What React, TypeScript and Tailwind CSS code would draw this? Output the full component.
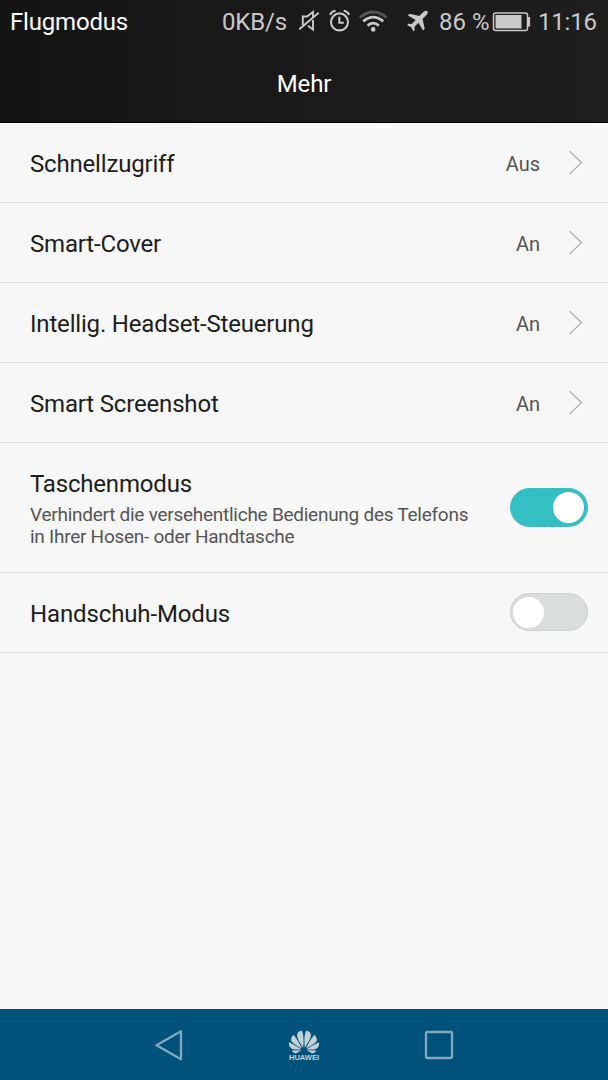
import React from "react"
import { SiHuawei } from "react-icons/si"

const links = [
  { label: "Schnellzugriff", value: "Aus" },
  { label: "Smart-Cover", value: "An" },
  { label: "Intellig. Headset-Steuerung", value: "An" },
  { label: "Smart Screenshot", value: "An" },
]

function StatusBar() {
  return (
    <div className="flex h-[42px] items-center whitespace-nowrap pt-[2px] pl-[10px] text-2xl leading-[42px] tracking-[-0.18px] text-[#c9c9c9]">
      <span className="w-[212px] text-white">Flugmodus</span>
      <span className="w-[76px]">0KB/s</span>
      {/* muted */}
      <svg viewBox="298 0 22 42" className="-mt-[2px] h-[42px] w-[22px] shrink-0" fill="none" stroke="#c9c9c9" strokeWidth="1.900">
        <path d="M302.800 25.300v-8.800h4.200l6-4.500v5M313 20v9.500l-5-3.700" />
        <path d="M299.300 29.300L318.700 12.700" />
      </svg>
      {/* alarm */}
      <svg viewBox="328 0 24 42" className="-mt-[2px] ml-2 h-[42px] w-6 shrink-0" fill="none" stroke="#c9c9c9" strokeWidth="2.100">
        <circle cx="339.500" cy="21.900" r="8.500" />
        <path d="M339.300 16.800v6h4.500M330 14.800q1.700-3.400 5.500-4M349.200 14.800q-1.700-3.400-5.500-4" />
      </svg>
      {/* wifi */}
      <svg viewBox="358 0 30 42" className="-mt-[2px] ml-[6px] h-[42px] w-[30px] shrink-0" fill="none" stroke="#c9c9c9" strokeWidth="2.700">
        <path d="M359.800 17.500q13.400-11 26.800 0" stroke="#555" />
        <path d="M363.200 21.400q10-8.500 20 0M367.500 25.600q5.700-4.800 11.400 0" />
        <circle cx="373.200" cy="29.400" r="2.300" fill="#c9c9c9" stroke="none" />
      </svg>
      {/* airplane */}
      <svg viewBox="406 0 24 42" className="-mt-[2px] ml-[18px] h-[42px] w-6 shrink-0" fill="#c9c9c9">
        <path d="M427.300 11.200c.9.800.6 2-.4 3.200l-4.300 4.500 2.100 10.200-1.700 1.500-4.500-7.800-4 4 .2 3.200-1.400 1.400-2-4.200-4.200-2 1.400-1.400 3.200.2 4-4.100-7.800-4.400 1.600-1.700 9.800 2.100 4.600-4.300c1.200-1 2.600-1.200 3.400-.4z" />
      </svg>
      <span className="ml-[9px] w-[53px] tracking-[0px]">86 %</span>
      <svg viewBox="492 0 40 42" className="-mt-[2px] h-[42px] w-10 shrink-0" fill="none" stroke="#c9c9c9" strokeWidth="1.500">
        <rect x="493.500" y="13" width="34" height="17.500" rx="2" />
        <path d="M529 17v9.500" strokeWidth="2.200" />
        <rect x="495.500" y="15" width="26" height="13.500" fill="#c9c9c9" stroke="none" />
      </svg>
      <span className="ml-[6px]">11:16</span>
    </div>
  )
}

function Toggle({ on }: { on: boolean }) {
  return on ? (
    <span className="flex h-[39px] w-[78px] items-center justify-end rounded-full border border-[#43bcc0] bg-[#34bfc4] pr-[3px]">
      <span className="h-[31px] w-[31px] rounded-full bg-white" />
    </span>
  ) : (
    <span className="mb-[1px] flex h-[38.500px] w-[78px] items-center rounded-full border border-[#cfd1d1] bg-[#dbdddd] pl-[2px]">
      <span className="h-[31px] w-[31px] rounded-full bg-white" />
    </span>
  )
}

function NavBar() {
  return (
    <nav className="h-[71px] bg-[#00527b]">
      <div className="flex h-full items-center justify-between px-[154px]">
        <svg viewBox="0 0 30 32" className="h-8 w-[30px]" fill="none" stroke="#80a9be" strokeWidth="2.300">
          <path d="M27 2.200v28L2.500 16.300z" strokeLinejoin="round" />
        </svg>
        <div className="flex w-[40px] flex-col items-center text-[#c3d0d8]">
          <SiHuawei className="h-[30px] w-[30px]" />
          <span className="-mt-[3px] font-['Liberation_Sans'] text-[7.500px] leading-[8px] font-bold">HUAWEI</span>
        </div>
        <svg viewBox="0 0 30 30" className="h-[30px] w-[30px]" fill="none" stroke="#80a9be" strokeWidth="2.300">
          <rect x="2" y="2" width="26" height="26" rx="1" />
        </svg>
      </div>
    </nav>
  )
}

function App() {
  return (
    <div className="flex h-[1080px] w-[608px] flex-col overflow-hidden bg-[#f7f7f7] font-[Roboto,sans-serif]">
      <header className="h-[123px] border-b border-black bg-linear-to-r from-[#141414] via-[#1a1a1a] to-[#1e1e1e]">
        <StatusBar />
        <h1 className="pt-[2px] text-center text-2xl leading-[80px] tracking-[-0.18px] text-white">Mehr</h1>
      </header>
      <main className="flex-1 text-2xl tracking-[-0.18px] text-[#1d1d1d]">
        {links.map((item) => (
          <div key={item.label} className="flex h-20 items-center border-b border-[#dedede] pr-[25px] pl-[30px]">
            <span className="flex-1 pt-[2px]">{item.label}</span>
            <span className="pt-[2px] text-xl tracking-normal text-[#555]">{item.value}</span>
            <svg viewBox="0 0 15 26" className="ml-[28px] h-[26px] w-[15px]" fill="none" stroke="#a3a8aa" strokeWidth="1.200">
              <path d="M1.500 1.100L13.500 12.600L1.500 24.100" />
            </svg>
          </div>
        ))}
        <div className="flex h-[130px] items-center border-b border-[#dedede] pr-5 pl-[30px]">
          <div className="flex-1 pt-[2px]">
            <p className="leading-8">Taschenmodus</p>
            <p className="mt-[4px] mb-[1px] text-[19px] leading-[22px] tracking-[-0.26px] text-[#555]">
              Verhindert die versehentliche Bedienung des Telefons
              <br />
              in Ihrer Hosen- oder Handtasche
            </p>
          </div>
          <Toggle on={true} />
        </div>
        <div className="flex h-20 items-center border-b border-[#dedede] pr-5 pl-[30px]">
          <span className="flex-1 pt-[2px] tracking-[-0.13px]">Handschuh-Modus</span>
          <Toggle on={false} />
        </div>
      </main>
      <NavBar />
    </div>
  )
}

export default App
